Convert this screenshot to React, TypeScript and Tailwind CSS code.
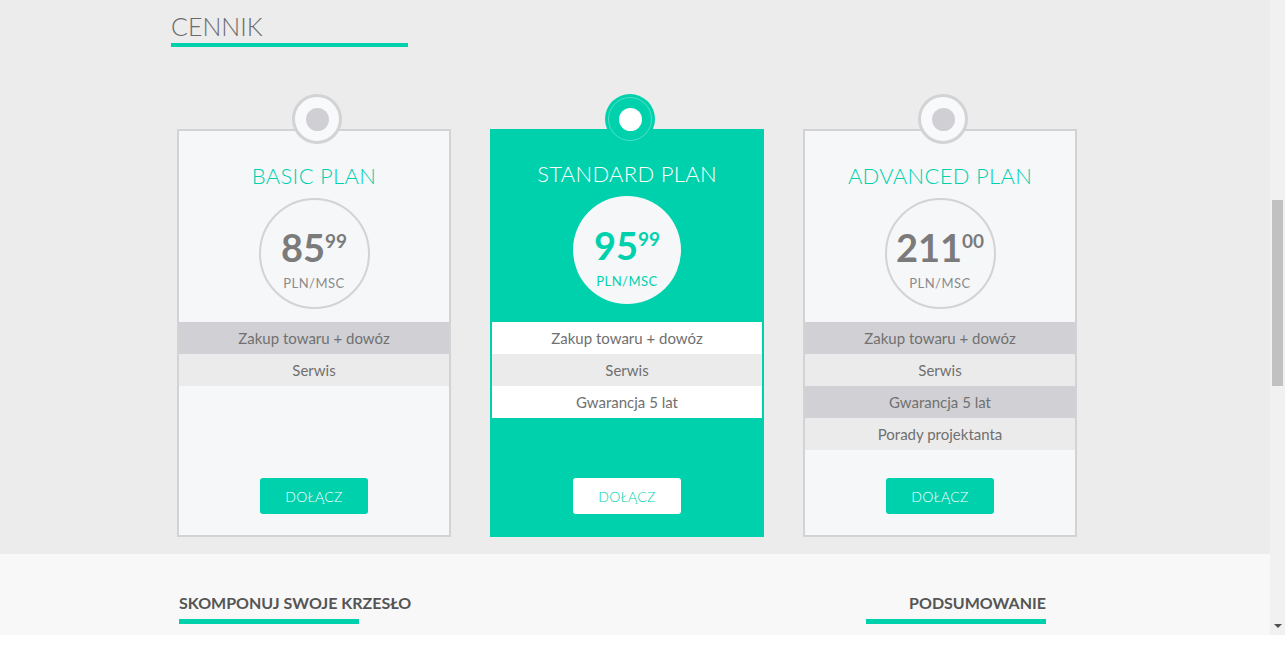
const TEAL = "#00d1ad";

type Plan = {
  name: string;
  price: string;
  cents: string;
  features: string[];
  featured?: boolean;
};

const PLANS: Plan[] = [
  { name: "BASIC PLAN", price: "85", cents: "99", features: ["Zakup towaru + dowóz", "Serwis"] },
  {
    name: "STANDARD PLAN",
    price: "95",
    cents: "99",
    features: ["Zakup towaru + dowóz", "Serwis", "Gwarancja 5 lat"],
    featured: true,
  },
  {
    name: "ADVANCED PLAN",
    price: "211",
    cents: "00",
    features: ["Zakup towaru + dowóz", "Serwis", "Gwarancja 5 lat", "Porady projektanta"],
  },
];

function PlanCard({ plan }: { plan: Plan }) {
  const featured = !!plan.featured;

  return (
    <div
      className={`relative flex h-[408px] w-[274px] flex-col border-2 ${
        featured ? "border-[#00d1ad] bg-[#00d1ad]" : "border-[#d3d3d6] bg-[#f6f7f9]"
      }`}
    >
      {/* hanging tag */}
      {featured ? (
        <div className="absolute left-[113px] top-[-37px] flex h-[50px] w-[50px] items-center justify-center rounded-full bg-[#00d1ad]">
          <div className="flex h-[44px] w-[44px] items-center justify-center rounded-full border border-white/30">
            <div className="h-[23px] w-[23px] rounded-full bg-white" />
          </div>
        </div>
      ) : (
        <div className="absolute left-[113px] top-[-37px] flex h-[50px] w-[50px] items-center justify-center rounded-full border-[3px] border-[#d3d3d6] bg-[#f8f9fa]">
          <div className="h-[23px] w-[23px] rounded-full bg-[#d0cfd4]" />
        </div>
      )}

      <h3
        className={`text-center text-[22px] font-light leading-[26px] tracking-[0.3px] ${
          featured ? "mt-[30px] text-white" : "mt-[32px] text-[#00d1ad]"
        }`}
      >
        {plan.name}
      </h3>

      <div
        className={`mx-auto flex flex-col items-center rounded-full ${
          featured
            ? "mt-[9px] h-[108px] w-[108px] bg-[#f6f7f9] pt-[28px]"
            : "mt-[9px] h-[111px] w-[111px] border-2 border-[#d3d3d6] pt-[26px]"
        }`}
      >
        <div
          className={`flex items-start font-bold ${featured ? "text-[#00d1ad]" : "text-[#7b7b7b]"}`}
        >
          <span className="text-[38px] leading-[42px]">{plan.price}</span>
          <span className="mt-[5px] text-[19px] leading-[20px]">{plan.cents}</span>
        </div>
        <span
          className={`mt-[7px] text-[13px] leading-[16px] tracking-[0.5px] ${
            featured ? "text-[#00d1ad]" : "text-[#8a8a8a]"
          }`}
        >
          PLN/MSC
        </span>
      </div>

      <ul className={featured ? "mt-[18px]" : "mt-[13px]"}>
        {plan.features.map((feature, i) => {
          const bg = featured
            ? i % 2 === 0
              ? "bg-white"
              : "bg-[#ebebeb]"
            : i % 2 === 0
              ? "bg-[#d1d0d5]"
              : "bg-[#ebebeb]";
          return (
            <li
              key={feature}
              className={`flex h-[32px] items-center justify-center text-[15px] text-[#707070] ${bg}`}
            >
              {feature}
            </li>
          );
        })}
      </ul>

      <button
        type="button"
        className={`mx-auto mb-[21px] mt-auto h-[36px] w-[108px] rounded-[3px] text-[14px] font-light tracking-[0.3px] ${
          featured ? "bg-white text-[#00d1ad]" : "bg-[#00d1ad] text-white"
        }`}
      >
        DOŁĄCZ
      </button>
    </div>
  );
}

function SectionHeading({ title, align }: { title: string; align: "left" | "right" }) {
  return (
    <div className={`flex flex-col ${align === "right" ? "items-end" : "items-start"}`}>
      <h2 className="text-[16px] font-bold leading-[20px] text-[#555555]">{title}</h2>
      <div className="mt-[6px] h-[5px] w-[180px]" style={{ backgroundColor: TEAL }} />
    </div>
  );
}

export default function App() {
  return (
    <div
      className="flex h-[648px] w-[1288px] flex-col overflow-hidden bg-white"
      style={{ fontFamily: "Lato, 'Open Sans', sans-serif" }}
    >
      <div className="flex h-[635px] w-[1285px]">
        <main className="w-[1270px] overflow-hidden">
          <section className="h-[554px] bg-[#ececec] pl-[171px] pt-[11px]">
            <h1 className="text-[25px] font-light leading-[30px] text-[#6b6b6b]">CENNIK</h1>
            <div className="mt-[2px] h-[4px] w-[237px] bg-[#00d1ad]" />

            <div className="ml-[6px] mt-[82px] flex gap-[39px]">
              {PLANS.map((plan) => (
                <PlanCard key={plan.name} plan={plan} />
              ))}
            </div>
          </section>

          <section className="flex h-[81px] items-start justify-between bg-[#f8f8f8] pl-[179px] pr-[224px] pt-[39px]">
            <SectionHeading title="SKOMPONUJ SWOJE KRZESŁO" align="left" />
            <SectionHeading title="PODSUMOWANIE" align="right" />
          </section>
        </main>

        {/* browser scrollbar */}
        <div className="flex w-[15px] flex-col items-center bg-[#f1f1f1]">
          <div className="mt-[200px] h-[186px] w-[11px] bg-[#c1c1c1]" />
          <div className="mt-auto mb-[7px] h-0 w-0 border-x-[4px] border-t-[4px] border-x-transparent border-t-[#505050]" />
        </div>
      </div>
    </div>
  );
}
